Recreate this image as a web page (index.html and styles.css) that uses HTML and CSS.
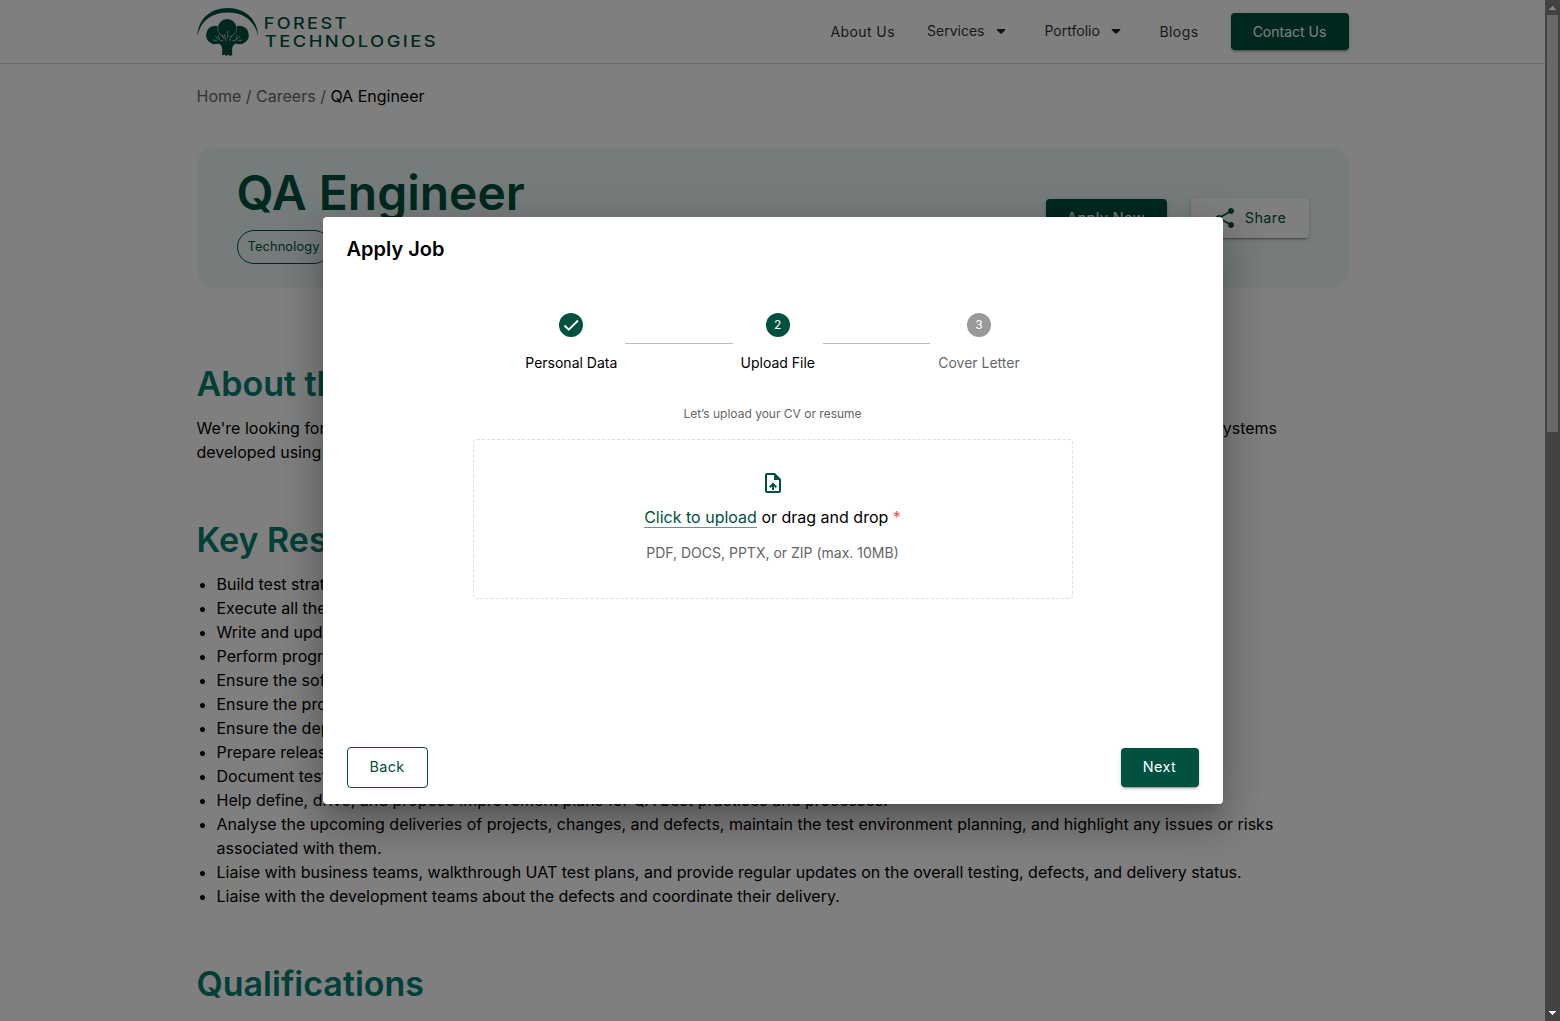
FILE: index.html
```html
<!DOCTYPE html>
<html lang="en">
<head>
<meta charset="utf-8">
<title>QA Engineer - Forest Technologies</title>
<link rel="stylesheet" href="styles.css">
</head>
<body>
<div class="page">
  <header class="header">
    <div class="container header-row">
      <svg class="logo" width="242" height="50" viewBox="196.800 7 242 50" role="img" aria-label="Forest Technologies">
        <path d="M197 36C198 19 210 8 227.500 8S257 19 258 36C254 20 243 12.500 227.500 12.500S201 20 197 36Z"/>
        <circle cx="215" cy="35" r="9.200"/>
        <circle cx="239.500" cy="35" r="9.200"/>
        <path d="M212 37C217 44 222 44 222 49V55.500L224.500 54.500 226 56 228 54.500 230 56 232 55V49C232 44 238 43 243 37Z"/>
        <circle class="crown" cx="227" cy="28.200" r="9.400"/>
        <path d="M218 37H237L233 43H221Z"/>
        <path class="twig" d="M215 36l4 4 4 1M217 41l-4-1M219 39l-1-4M226 41l-2-7M227.500 38l0-7M229 41l3-6M240 36l-4 4-4 1M238 41l4-1M236 39l1-4M224 39l-2-4"/>
        <text x="263.500" y="29" textLength="85" lengthAdjust="spacingAndGlyphs">FOREST</text>
        <text x="264.500" y="47" textLength="173.500" lengthAdjust="spacingAndGlyphs">TECHNOLOGIES</text>
      </svg>
      <nav class="nav">
        <a class="nav-link about">About Us</a>
        <a class="nav-link menu services">Services<svg width="24" height="24" viewBox="0 0 24 24"><path d="M7.500 10.500Q7.500 10 8.200 10h7.600q.9 0 .5.900L13 14.200q-1 .9-2 0l-3.200-3.100Z"/></svg></a>
        <a class="nav-link menu portfolio">Portfolio<svg width="24" height="24" viewBox="0 0 24 24"><path d="M7.500 10.500Q7.500 10 8.200 10h7.600q.9 0 .5.900L13 14.200q-1 .9-2 0l-3.200-3.100Z"/></svg></a>
        <a class="nav-link blogs">Blogs</a>
        <button class="btn solid contact">Contact Us</button>
      </nav>
    </div>
  </header>
  <main class="container main">
    <div class="crumbs">Home / Careers / <span>QA Engineer</span></div>
    <section class="banner">
      <div class="banner-info">
        <h1>QA Engineer</h1>
        <span class="chip">Technology</span>
      </div>
      <div class="banner-actions">
        <button class="btn solid apply">Apply Now</button>
        <button class="btn share"><svg width="24" height="24" viewBox="0 0 24 24"><path d="M18 16.080c-.76 0-1.440.3-1.960.77L8.910 12.700c.05-.23.090-.46.090-.7s-.04-.47-.09-.7l7.050-4.110c.54.5 1.250.81 2.040.81 1.660 0 3-1.340 3-3s-1.340-3-3-3-3 1.340-3 3c0 .24.040.47.090.7L8.040 9.810C7.500 9.310 6.790 9 6 9c-1.660 0-3 1.340-3 3s1.340 3 3 3c.79 0 1.500-.31 2.040-.81l7.120 4.160c-.05.21-.08.43-.08.650 0 1.610 1.310 2.920 2.920 2.920s2.920-1.310 2.920-2.920-1.310-2.920-2.920-2.920z"/></svg>Share</button>
      </div>
    </section>
    <section class="block intro">
      <h2>About the Role</h2>
      <p class="intro-line"><span>We're looking for a QA Engineer to join our team</span><span>ystems</span></p>
      <p>developed using modern tools.</p>
    </section>
    <section class="block">
      <h2>Key Responsibilities</h2>
      <ul>
        <li>Build test strategies.</li>
        <li>Execute all the test cases.</li>
        <li>Write and update test cases.</li>
        <li>Perform progress reporting.</li>
        <li>Ensure the software quality.</li>
        <li>Ensure the process is followed.</li>
        <li>Ensure the deployment is tested.</li>
        <li>Prepare releases.</li>
        <li>Document tests.</li>
        <li>Help define, drive, and propose improvement plans for QA best practices and processes.</li>
        <li>Analyse the upcoming deliveries of projects, changes, and defects, maintain the test environment planning, and highlight any issues or risks associated with them.</li>
        <li>Liaise with business teams, walkthrough UAT test plans, and provide regular updates on the overall testing, defects, and delivery status.</li>
        <li>Liaise with the development teams about the defects and coordinate their delivery.</li>
      </ul>
    </section>
    <section class="block">
      <h2>Qualifications</h2>
    </section>
  </main>
</div>
<div class="scrollbar">
  <svg width="15" height="15" viewBox="0 0 15 15"><path class="up" d="M7 6h1v1h1v1h1v1h1v1H4V9h1V8h1V7h1z"/></svg>
  <div class="thumb"></div>
  <svg class="end" width="15" height="15" viewBox="0 0 15 15"><path class="down" d="M4 5h7v1h-1v1H9v1H8v1H7V8H6V7H5V6H4z"/></svg>
</div>
<div class="overlay">
  <div class="dialog" role="dialog">
    <h3>Apply Job</h3>
    <div class="stepper">
      <div class="step"><span class="dot"><svg width="24" height="24" viewBox="0 0 24 24"><path d="M5.500 12.500l4.200 4.200L19 7.500"/></svg></span>Personal Data</div>
      <i class="line"></i>
      <div class="step"><span class="dot">2</span>Upload File</div>
      <i class="line"></i>
      <div class="step idle"><span class="dot">3</span>Cover Letter</div>
    </div>
    <p class="hint">Let’s upload your CV or resume</p>
    <div class="drop">
      <svg width="24" height="24" viewBox="0 0 24 24"><path fill-rule="evenodd" d="M14 2H6a2 2 0 0 0-2 2v16a2 2 0 0 0 2 2h12a2 2 0 0 0 2-2V8ZM6 4h7v5h5v11H6Z"/><path d="M12 11.500l-4 4 1.400 1.400 1.600-1.600V19h2v-3.700l1.600 1.600 1.400-1.400Z"/></svg>
      <p class="drop-title"><a>Click to upload</a> or drag and drop <em>*</em></p>
      <p class="drop-note">PDF, DOCS, PPTX, or ZIP (max. 10MB)</p>
    </div>
    <div class="footer">
      <button class="btn outline">Back</button>
      <button class="btn solid next">Next</button>
    </div>
  </div>
</div>
</body>
</html>
```
FILE: styles.css
```css
* { box-sizing: border-box; }
body { margin: 0; height: 1021px; overflow: hidden; display: flex; font: 400 16px/24px Inter, "Liberation Sans", sans-serif; color: #000; background: #fff; }
h1, h2, h3, p, ul { margin: 0; }
.page { width: 1545px; height: 1021px; overflow: hidden; }
.container { width: 1152px; margin: 0 auto; }
.header { height: 64px; border-bottom: 1px solid #d6d6d6; }
.header-row { height: 63px; display: flex; justify-content: space-between; align-items: center; }
.logo { fill: #00513f; }
.logo text { font: 500 16.500px Inter, sans-serif; letter-spacing: 2.200px; }
.logo .crown { stroke: #fff; stroke-width: .5; }
.logo .twig { fill: none; stroke: #e0e0e0; stroke-width: .7; }
.nav { display: flex; align-items: center; color: #333; font-size: 14px; letter-spacing: .4px; }
.nav-link { display: flex; align-items: center; height: 24px; }
.nav svg { fill: #222; margin-left: 4px; }
.menu { letter-spacing: 0; padding-bottom: 2px; }
.about { width: 96.500px; }
.services { width: 117.500px; }
.portfolio { width: 115px; }
.blogs { width: 71px; }
.services svg { margin-left: 4.500px; }
.btn { font: 400 14.400px/24px Inter, "Liberation Sans", sans-serif; letter-spacing: .4px; border: 0; border-radius: 4px; padding: 0 0 1px; display: flex; align-items: center; justify-content: center; }
.solid { background: #00513f; color: #fff; box-shadow: 0 3px 1px -2px rgba(0,0,0,.2), 0 2px 2px rgba(0,0,0,.14), 0 1px 5px rgba(0,0,0,.12); }
.contact { width: 118px; height: 37px; font-size: 14px; letter-spacing: 0; padding: 0; }
.crumbs { margin-top: 20px; color: #666; }
.crumbs span { color: #000; }
.banner { margin-top: 40px; height: 140px; border-radius: 16px; background: #eaf9f7; padding: 0 40px; display: flex; justify-content: space-between; align-items: center; }
.banner-info { height: 140px; padding-top: 17px; }
h1 { font-size: 48px; line-height: 56px; font-weight: 600; color: #00513f; }
.chip { display: inline-flex; align-items: center; margin-top: 9px; height: 34px; padding: 0 10px; border: 1px solid #00513f; border-radius: 17px; font-size: 12.800px; letter-spacing: .14px; color: #00513f; }
.banner-actions { display: flex; gap: 24px; align-items: center; }
.apply { width: 121px; height: 39px; padding: 0; }
.share { width: 118px; height: 40px; padding: 0; gap: 8px; background: #fff; color: #00513f; box-shadow: 0 3px 1px -2px rgba(0,0,0,.2), 0 2px 2px rgba(0,0,0,.14), 0 1px 5px rgba(0,0,0,.12); }
.share svg { fill: #00513f; }
h2 { font-size: 34px; line-height: 40px; font-weight: 600; color: #008070; margin-bottom: 12px; }
.block { margin-top: 56px; }
.intro { margin-top: 76px; }
.intro-line { display: flex; justify-content: space-between; width: 1080.500px; }
ul { padding-left: 20px; width: 1100px; }
.scrollbar { width: 15px; height: 1021px; background: #424242; display: flex; flex-direction: column; }
.scrollbar svg { flex: none; }
.thumb { width: 11px; height: 417px; margin-left: 2px; background: #686868; }
.up { fill: #868686; }
.down { fill: #fff; }
.end { margin-top: auto; }
.overlay { position: absolute; left: 0; top: 0; width: 1545px; height: 1021px; background: rgba(0,0,0,.5); display: flex; align-items: center; justify-content: center; }
.dialog { width: 900px; height: 587px; background: #fff; border-radius: 4px; padding: 16px 24px; display: flex; flex-direction: column; align-items: center; box-shadow: 0 11px 15px -7px rgba(0,0,0,.2), 0 24px 38px 3px rgba(0,0,0,.14), 0 9px 46px 8px rgba(0,0,0,.12); }
h3 { align-self: flex-start; font-size: 20px; line-height: 32px; font-weight: 600; }
.stepper { margin-top: 48px; display: flex; align-items: center; font-size: 14px; line-height: 20px; }
.step { display: flex; flex-direction: column; align-items: center; gap: 16px; padding: 0 8px; }
.dot { width: 24px; height: 24px; border-radius: 50%; background: #00513f; color: #fff; font-size: 12px; display: flex; align-items: center; justify-content: center; }
.dot path { fill: none; stroke: #fff; stroke-width: 1.8; }
.idle { color: #666; }
.idle .dot { background: #999; }
.line { width: 107.200px; height: 1px; background: #bdbdbd; }
.hint { margin-top: 31px; font-size: 12px; line-height: 20px; color: #666; }
.drop { margin-top: 15px; width: 600px; height: 160px; border: 1px dashed #e0e0e0; border-radius: 4px; padding-top: 31px; display: flex; flex-direction: column; align-items: center; }
.drop svg { fill: #00513f; }
.drop-title { margin-top: 10px; }
.drop-title a { color: #00513f; border-bottom: 1px solid #669788; }
.drop-title em { color: #ef5350; font-style: normal; }
.drop-note { margin-top: 12px; font-size: 14px; color: #666; }
.footer { margin-top: auto; width: 100%; display: flex; align-items: center; justify-content: space-between; }
.outline { width: 81px; height: 41px; border: 1px solid #00513f; background: #fff; color: #00513f; }
.next { width: 78px; height: 39px; }
```
